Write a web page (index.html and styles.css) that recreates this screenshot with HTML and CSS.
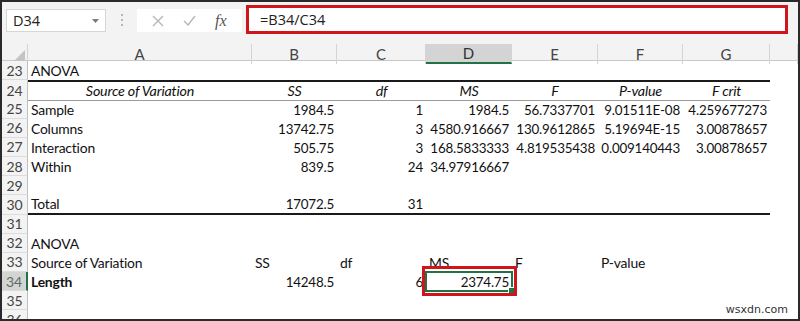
FILE: index.html
```html
<!DOCTYPE html>
<html lang="en">
<head>
    <meta charset="UTF-8">
    <title>ANOVA - Excel</title>
    <link rel="stylesheet" href="styles.css">
</head>
<body>
    <div class="window">
        <!-- formula bar -->
        <div class="toolbar">
            <div class="name-box">
                <span>D34</span>
                <svg class="caret" width="7" height="4" viewBox="0 0 7 4"><path d="M0 0h7L3.5 4z" fill="#7a7a7a"/></svg>
            </div>
            <div class="grip"><i></i><i></i><i></i></div>
            <div class="fx-buttons">
                <svg width="12" height="12" viewBox="0 0 12 12"><path d="M1 1l10 10M11 1L1 11" stroke="#b4b4b4" stroke-width="1.3" fill="none"/></svg>
                <svg width="13" height="11" viewBox="0 0 13 11"><path d="M1 6l4 4 7-9" stroke="#b4b4b4" stroke-width="1.3" fill="none"/></svg>
                <span class="fx">fx</span>
            </div>
            <div class="formula">=B34/C34</div>
        </div>

        <!-- column headers -->
        <div class="col-heads">
            <div class="corner"><svg width="12" height="12" viewBox="0 0 12 12"><path d="M12 0v12H0z" fill="#c4c4c4"/></svg></div>
            <div>A</div>
            <div>B</div>
            <div>C</div>
            <div class="active">D</div>
            <div>E</div>
            <div>F</div>
            <div>G</div>
            <div></div>
        </div>

        <!-- cells -->
        <div class="rows">
            <div class="row">
                <div class="rh">23</div><div class="cell">ANOVA</div>
            </div>
            <div class="row table-head">
                <div class="rh">24</div>
                <div class="cell center">Source of Variation</div>
                <div class="cell center">SS</div>
                <div class="cell center">df</div>
                <div class="cell center">MS</div>
                <div class="cell center">F</div>
                <div class="cell center">P-value</div>
                <div class="cell center">F crit</div>
            </div>
            <div class="row">
                <div class="rh">25</div>
                <div class="cell">Sample</div>
                <div class="cell num">1984.5</div>
                <div class="cell num">1</div>
                <div class="cell num">1984.5</div>
                <div class="cell num">56.7337701</div>
                <div class="cell num">9.01511E-08</div>
                <div class="cell num">4.259677273</div>
            </div>
            <div class="row">
                <div class="rh">26</div>
                <div class="cell">Columns</div>
                <div class="cell num">13742.75</div>
                <div class="cell num">3</div>
                <div class="cell num">4580.916667</div>
                <div class="cell num">130.9612865</div>
                <div class="cell num">5.19694E-15</div>
                <div class="cell num">3.00878657</div>
            </div>
            <div class="row">
                <div class="rh">27</div>
                <div class="cell">Interaction</div>
                <div class="cell num">505.75</div>
                <div class="cell num">3</div>
                <div class="cell num">168.5833333</div>
                <div class="cell num">4.819535438</div>
                <div class="cell num">0.009140443</div>
                <div class="cell num">3.00878657</div>
            </div>
            <div class="row">
                <div class="rh">28</div>
                <div class="cell">Within</div>
                <div class="cell num">839.5</div>
                <div class="cell num">24</div>
                <div class="cell num">34.97916667</div>
            </div>
            <div class="row">
                <div class="rh">29</div>
            </div>
            <div class="row table-foot">
                <div class="rh">30</div>
                <div class="cell">Total</div>
                <div class="cell num">17072.5</div>
                <div class="cell num">31</div>
                <div class="cell"></div>
                <div class="cell"></div>
                <div class="cell"></div>
                <div class="cell"></div>
            </div>
            <div class="row">
                <div class="rh">31</div>
            </div>
            <div class="row">
                <div class="rh">32</div><div class="cell">ANOVA</div>
            </div>
            <div class="row">
                <div class="rh">33</div>
                <div class="cell">Source of Variation</div>
                <div class="cell">SS</div>
                <div class="cell">df</div>
                <div class="cell">MS</div>
                <div class="cell">F</div>
                <div class="cell">P-value</div>
            </div>
            <div class="row">
                <div class="rh active">34</div>
                <div class="cell bold">Length</div>
                <div class="cell num">14248.5</div>
                <div class="cell num">6</div>
                <div class="cell num selected">2374.75<span class="handle"></span><span class="highlight"></span></div>
            </div>
            <div class="row">
                <div class="rh">35</div>
            </div>
            <div class="row">
                <div class="rh">36</div>
            </div>
        </div>

        <div class="watermark">wsxdn.com</div>
    </div>
</body>
</html>
```

FILE: styles.css
```css
:root {
    --cols: 26px 224px 85px 89px 86px 86px 85px 87px 1fr;
    --head-bg: #f3f3f3;
    --excel-green: #217346;
    --mark-red: #d0141c;
    --row-h: 19.2px;
}

body {
    margin: 0;
    font-family: Lato, "Liberation Sans", sans-serif;
    color: #111;
}

.window {
    position: relative;
    width: 800px;
    height: 321px;
    box-sizing: border-box;
    border: 2px solid #2a2a2a;
    overflow: hidden;
    background: #fff;
}

/* formula bar */
.toolbar {
    display: flex;
    align-items: flex-start;
    height: 42px;
    padding-left: 4px;
    background: var(--head-bg);
}

.name-box {
    display: flex;
    align-items: center;
    justify-content: space-between;
    box-sizing: border-box;
    width: 100px;
    height: 23px;
    margin-top: 7px;
    padding: 0 6px;
    background: #fff;
    border: 1px solid #d6d6d6;
    font-family: "Open Sans", sans-serif;
    font-size: 14.5px;
    color: #222;
}

.grip {
    display: flex;
    flex-direction: column;
    align-items: center;
    gap: 3px;
    flex: none;
    width: 31px;
    margin-top: 12px;
}

.grip i {
    width: 2px;
    height: 2px;
    background: #b8b8b8;
}

.fx-buttons {
    display: flex;
    align-items: center;
    justify-content: space-around;
    flex: none;
    box-sizing: border-box;
    width: 105px;
    height: 23px;
    margin-top: 7px;
    padding: 0 6px;
    background: #fff;
}

.fx {
    font-family: "Liberation Serif", serif;
    font-style: italic;
    font-size: 16px;
    color: #555;
}

.formula {
    display: flex;
    align-items: center;
    flex: none;
    box-sizing: border-box;
    width: 542px;
    height: 29px;
    margin: 3px 0 0 4px;
    padding-left: 11px;
    background: #fff;
    border: 3px solid var(--mark-red);
    font-family: "Open Sans", sans-serif;
    font-size: 14.5px;
    color: #222;
}

/* column headers */
.col-heads {
    display: grid;
    grid-template-columns: var(--cols);
    box-sizing: border-box;
    height: 17px;
    background: var(--head-bg);
    border-bottom: 1px solid #c8c8c8;
}

.col-heads > div {
    display: flex;
    align-items: center;
    justify-content: center;
    border-right: 1px solid #d4d4d4;
    font-size: 15px;
    color: #444;
}

.col-heads .corner {
    align-items: flex-end;
    justify-content: flex-end;
    padding: 0 2px 2px 0;
}

.col-heads .active {
    background: #d4d4d4;
    border-bottom: 2px solid var(--excel-green);
    color: #333;
}

/* cell rows */
.row {
    display: grid;
    grid-template-columns: var(--cols);
    height: var(--row-h);
}

.rh {
    display: flex;
    align-items: center;
    justify-content: center;
    box-sizing: border-box;
    background: var(--head-bg);
    border-right: 1px solid #c0c0c0;
    border-bottom: 1px solid #dcdcdc;
    font-size: 14px;
    color: #444;
}

.rh.active {
    background: #d4d4d4;
    border-right: 2px solid var(--excel-green);
    color: #5a6e62;
}

.cell {
    display: flex;
    align-items: flex-end;
    box-sizing: border-box;
    padding: 0 3px 1px;
    font-size: 13.9px;
    letter-spacing: -0.2px;
    white-space: nowrap;
}

.cell.num {
    justify-content: flex-end;
    font-size: 13.4px;
}

.cell.center {
    justify-content: center;
}

.cell.bold {
    font-weight: bold;
}

.table-head .cell {
    border-top: 2px solid #1a1a1a;
    border-bottom: 1px solid #9a9a9a;
    font-style: italic;
    font-size: 14.3px;
}

.table-foot .cell {
    border-bottom: 2px solid #1a1a1a;
}

/* selected cell D34 */
.selected {
    position: relative;
    outline: 2px solid var(--excel-green);
    outline-offset: -1px;
}

.handle {
    position: absolute;
    right: -3px;
    bottom: -3px;
    width: 5px;
    height: 5px;
    background: var(--excel-green);
    border: 1px solid #fff;
}

.highlight {
    position: absolute;
    top: -6px;
    left: -4px;
    right: -5px;
    bottom: -5px;
    border: 3px solid var(--mark-red);
}

.watermark {
    position: absolute;
    right: 8px;
    bottom: 3px;
    padding: 0 2px;
    background: #fff;
    font-family: "DejaVu Sans", sans-serif;
    font-size: 11px;
    color: #333;
}
```
